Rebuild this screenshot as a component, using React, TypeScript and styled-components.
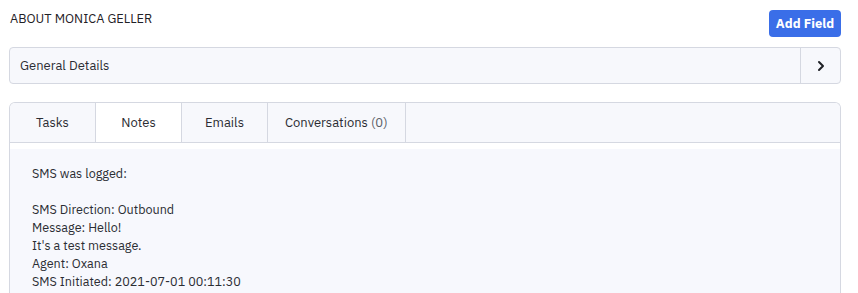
import { ChevronRight } from "lucide-react";
import styled, { createGlobalStyle } from "styled-components";

const GlobalStyle = createGlobalStyle`
  * {
    box-sizing: border-box;
  }

  body {
    margin: 0;
    background: #ffffff;
    font-family: "IBM Plex Sans", "Noto Sans", "Liberation Sans", sans-serif;
    color: #2b2d33;
  }
`;

const tabs = ["Tasks", "Notes", "Emails", "Conversations"];

const noteText = `SMS was logged:

SMS Direction: Outbound
Message: Hello!
It's a test message.
Agent: Oxana
SMS Initiated: 2021-07-01 00:11:30`;

export default function App() {
  return (
    <>
      <GlobalStyle />
      <Page>
        <Header>
          <Title>ABOUT MONICA GELLER</Title>
          <AddButton>Add Field</AddButton>
        </Header>

        <DetailsBox>
          <DetailsLabel>General Details</DetailsLabel>
          <DetailsToggle>
            <ChevronRight size={16} strokeWidth={3} />
          </DetailsToggle>
        </DetailsBox>

        <Card>
          <TabRow>
            {tabs.map((tab) => (
              <Tab key={tab} $active={tab === "Notes"}>
                {tab}
                {tab === "Conversations" && <Count> (0)</Count>}
              </Tab>
            ))}
          </TabRow>
          <CardBody>
            <Note>{noteText}</Note>
          </CardBody>
        </Card>
      </Page>
    </>
  );
}

const Page = styled.div`
  display: flex;
  flex-direction: column;

  width: 858px;
  height: 293px;

  padding: 10px 17px 0 9px;

  overflow: hidden;
`;

const Header = styled.div`
  display: flex;
  justify-content: space-between;
  align-items: flex-start;
  flex-shrink: 0;

  height: 27px;
  padding-left: 1px;
`;

const Title = styled.div`
  margin-top: 1px;

  font-size: 12.8px;
  line-height: 16px;
  color: #1f2126;
`;

const AddButton = styled.button`
  width: 72px;
  height: 27px;

  border: none;
  border-radius: 4px;

  background-color: #3a6ee8;

  color: white;

  font-family: inherit;
  font-size: 13px;
  font-weight: 700;
`;

const DetailsBox = styled.div`
  display: flex;
  flex-shrink: 0;

  height: 37px;
  margin-top: 10px;

  border: 1px solid #d5d8e1;
  border-radius: 4px;

  background-color: #f7f8fc;
`;

const DetailsLabel = styled.div`
  display: flex;
  align-items: center;
  flex: 1;

  padding-left: 10px;

  font-size: 13px;
  color: #2b2d33;
`;

const DetailsToggle = styled.div`
  display: flex;
  align-items: center;
  justify-content: center;

  width: 40px;

  border-left: 1px solid #d5d8e1;

  color: #1f2126;
`;

const Card = styled.div`
  display: flex;
  flex-direction: column;
  flex: 1 0 auto;

  margin-top: 18px;

  border: 1px solid #d5d8e1;
  border-bottom: none;
  border-radius: 6px 6px 0 0;

  overflow: hidden;
`;

const TabRow = styled.div`
  display: flex;
  flex-shrink: 0;

  height: 40px;

  border-bottom: 1px solid #d5d8e1;

  background-color: #f7f8fc;
`;

const Tab = styled.div<{ $active?: boolean }>`
  display: flex;
  align-items: center;
  justify-content: center;

  min-width: 86px;
  padding: 0 17px;

  border-right: 1px solid #d5d8e1;

  background-color: ${(p) => (p.$active ? "#ffffff" : "transparent")};

  font-size: 13px;
  color: #2b2d33;
`;

const Count = styled.span`
  white-space: pre;
  color: #5b5f68;
`;

const CardBody = styled.div`
  flex: 1 0 auto;

  padding-top: 6px;

  background-color: #ffffff;
`;

const Note = styled.div`
  padding: 15px 22px;

  background-color: #f7f8fd;

  white-space: pre-wrap;
  font-size: 12.6px;
  line-height: 18px;
  color: #2b2d33;
`;
